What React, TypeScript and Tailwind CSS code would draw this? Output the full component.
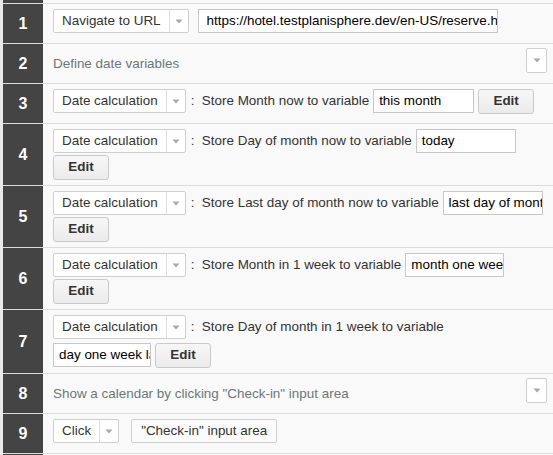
import type { ReactNode } from "react";

type Step =
  | { kind: "heading"; text: string }
  | { kind: "items"; items: ReactNode };

function Caret() {
  return (
    <svg width="8" height="5" viewBox="0 0 8 5">
      <path d="M0.5 0.5h7L4 4.5z" fill="#a8a8a8" />
    </svg>
  );
}

function Select({ label }: { label: string }) {
  return (
    <div className="flex h-[24px] items-stretch rounded-[2px] border border-[#cfcfcf] bg-white text-[#333]">
      <span className="px-[8px] leading-[22px]">{label}</span>
      <span className="flex w-[19px] items-center justify-center border-l border-[#dedede]">
        <Caret />
      </span>
    </div>
  );
}

function TextInput({ value, w }: { value: string; w: string }) {
  return (
    <div
      className={`h-[24px] overflow-hidden whitespace-nowrap border border-[#c8c8c8] bg-white px-[5px] leading-[22px] text-black ${w}`}
    >
      {value}
    </div>
  );
}

function EditButton() {
  return (
    <button className="h-[25px] w-[56px] rounded-[3px] border border-[#cacaca] bg-gradient-to-b from-[#f7f7f7] to-[#ebebeb] font-bold text-[#333]">
      Edit
    </button>
  );
}

function Label({ text }: { text: string }) {
  return <span className="ml-[1px] whitespace-pre leading-[24px] text-[#333]">{text}</span>;
}

function DateCalc({
  text,
  variable,
  inputW,
  wrap,
}: {
  text: string;
  variable: string;
  inputW: string;
  wrap?: boolean;
}) {
  return (
    <>
      <Select label="Date calculation" />
      <Label text={`:  ${text}`} />
      {wrap && <div className="-mb-[2px] h-0 basis-full" />}
      <TextInput value={variable} w={inputW} />
      <EditButton />
    </>
  );
}

const steps: Step[] = [
  {
    kind: "items",
    items: (
      <>
        <Select label="Navigate to URL" />
        <div className="ml-[5px]">
          <TextInput value="https://hotel.testplanisphere.dev/en-US/reserve.html" w="w-[300px] pl-[8px]" />
        </div>
      </>
    ),
  },
  { kind: "heading", text: "Define date variables" },
  {
    kind: "items",
    items: <DateCalc text="Store Month now to variable" variable="this month" inputW="w-[101px]" />,
  },
  {
    kind: "items",
    items: <DateCalc text="Store Day of month now to variable" variable="today" inputW="w-[100px]" />,
  },
  {
    kind: "items",
    items: (
      <DateCalc
        text="Store Last day of month now to variable"
        variable="last day of month"
        inputW="w-[100px]"
      />
    ),
  },
  {
    kind: "items",
    items: (
      <DateCalc text="Store Month in 1 week to variable" variable="month one week later" inputW="w-[99px]" />
    ),
  },
  {
    kind: "items",
    items: (
      <DateCalc
        text="Store Day of month in 1 week to variable"
        variable="day one week later"
        inputW="w-[98px]"
        wrap
      />
    ),
  },
  { kind: "heading", text: 'Show a calendar by clicking "Check-in" input area' },
  {
    kind: "items",
    items: (
      <>
        <Select label="Click" />
        <button className="ml-[8px] h-[24px] rounded-[2px] border border-[#cfcfcf] bg-[#fbfbfb] px-[9px] text-[#333]">
          "Check-in" input area
        </button>
      </>
    ),
  },
];

function Row({ num, children }: { num?: number; children?: ReactNode }) {
  return (
    <div className="flex border-t border-[#dcdcdc]">
      <div className="flex w-[40px] shrink-0 items-center justify-center bg-[#444] text-[16px] font-bold text-white">
        {num}
      </div>
      <div className="min-h-[39px] flex-1 bg-[#f9f9f9]">{children}</div>
    </div>
  );
}

export default function App() {
  return (
    <div className="h-[455px] w-[553px] overflow-hidden bg-[#e9e9e9] pl-[3px] font-['Liberation_Sans',Arial,sans-serif] text-[13.45px]">
      {/* tail of the previous step */}
      <div className="flex h-[3px]">
        <div className="w-[40px] bg-[#444]" />
        <div className="flex-1 bg-[#f9f9f9]" />
      </div>

      {steps.map((step, i) =>
        step.kind === "heading" ? (
          <Row key={i} num={i + 1}>
            <div className="flex items-start justify-between pl-[10px] pr-[6px] pt-[4px]">
              <span className="leading-[32px] text-[#6b7878]">{step.text}</span>
              <button className="flex h-[25px] w-[21px] items-center justify-center rounded-[2px] border border-[#cfcfcf] bg-white">
                <Caret />
              </button>
            </div>
          </Row>
        ) : (
          <Row key={i} num={i + 1}>
            <div className="flex flex-wrap items-start gap-x-[4px] gap-y-[2px] pb-[5px] pl-[10px] pr-[6px] pt-[5px]">
              {step.items}
            </div>
          </Row>
        )
      )}

      <Row num={10} />
    </div>
  );
}
